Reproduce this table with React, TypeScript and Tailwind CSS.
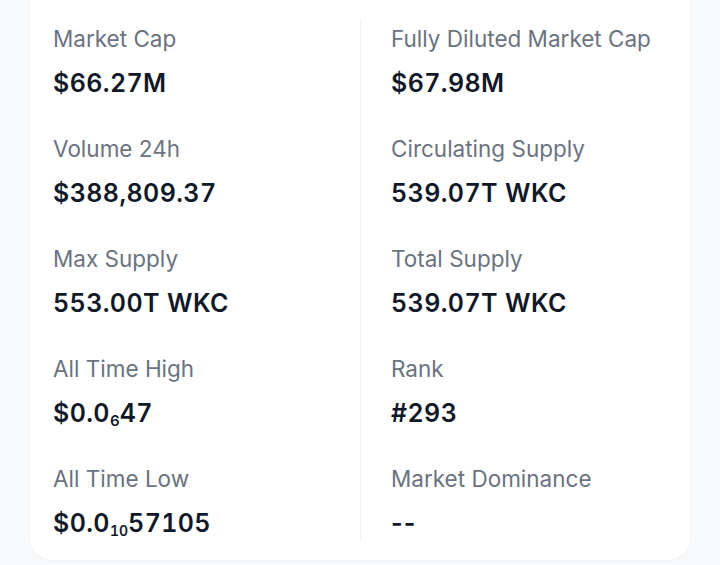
const left = [
  { label: 'Market Cap', value: <>$66.27M</> },
  { label: 'Volume 24h', value: <>$388,809.37</> },
  { label: 'Max Supply', value: <>553.00T WKC</> },
  {
    label: 'All Time High',
    value: (
      <>
        $0.0<sub className="text-[15px] font-semibold tracking-normal">6</sub>47
      </>
    ),
  },
  {
    label: 'All Time Low',
    value: (
      <>
        $0.0<sub className="text-[14px] font-semibold tracking-normal">10</sub>57105
      </>
    ),
  },
];

const right = [
  { label: 'Fully Diluted Market Cap', value: <>$67.98M</> },
  { label: 'Circulating Supply', value: <>539.07T WKC</> },
  { label: 'Total Supply', value: <>539.07T WKC</> },
  { label: 'Rank', value: <>#293</> },
  { label: 'Market Dominance', value: <span className="normal-nums tracking-[1px]">--</span> },
];

function Stat({ label, value }: { label: string; value: React.ReactNode }) {
  return (
    <div className="flex flex-col gap-3">
      <span className="text-[22.5px] leading-[30px] text-[#6b7280]">{label}</span>
      <span className="text-[25px] leading-[34px] font-semibold tracking-[0.4px] tabular-nums text-[#111827]">
        {value}
      </span>
    </div>
  );
}

export default function App() {
  return (
    <div className="min-h-[565px] bg-[#f8f9fb] px-[30px] font-['Inter',sans-serif]">
      <div className="rounded-b-[22px] bg-white pt-5 pb-[20px] shadow-[0_1px_3px_rgba(0,0,0,0.04)]">
        <div className="grid grid-cols-2">
          <div className="flex flex-col gap-[34px] pt-1 pl-[23px]">
            {left.map((s) => (
              <Stat key={s.label} {...s} />
            ))}
          </div>
          <div className="flex flex-col gap-[34px] border-l border-[#eef0f3] pt-1 pl-[30px]">
            {right.map((s) => (
              <Stat key={s.label} {...s} />
            ))}
          </div>
        </div>
      </div>
    </div>
  );
}
